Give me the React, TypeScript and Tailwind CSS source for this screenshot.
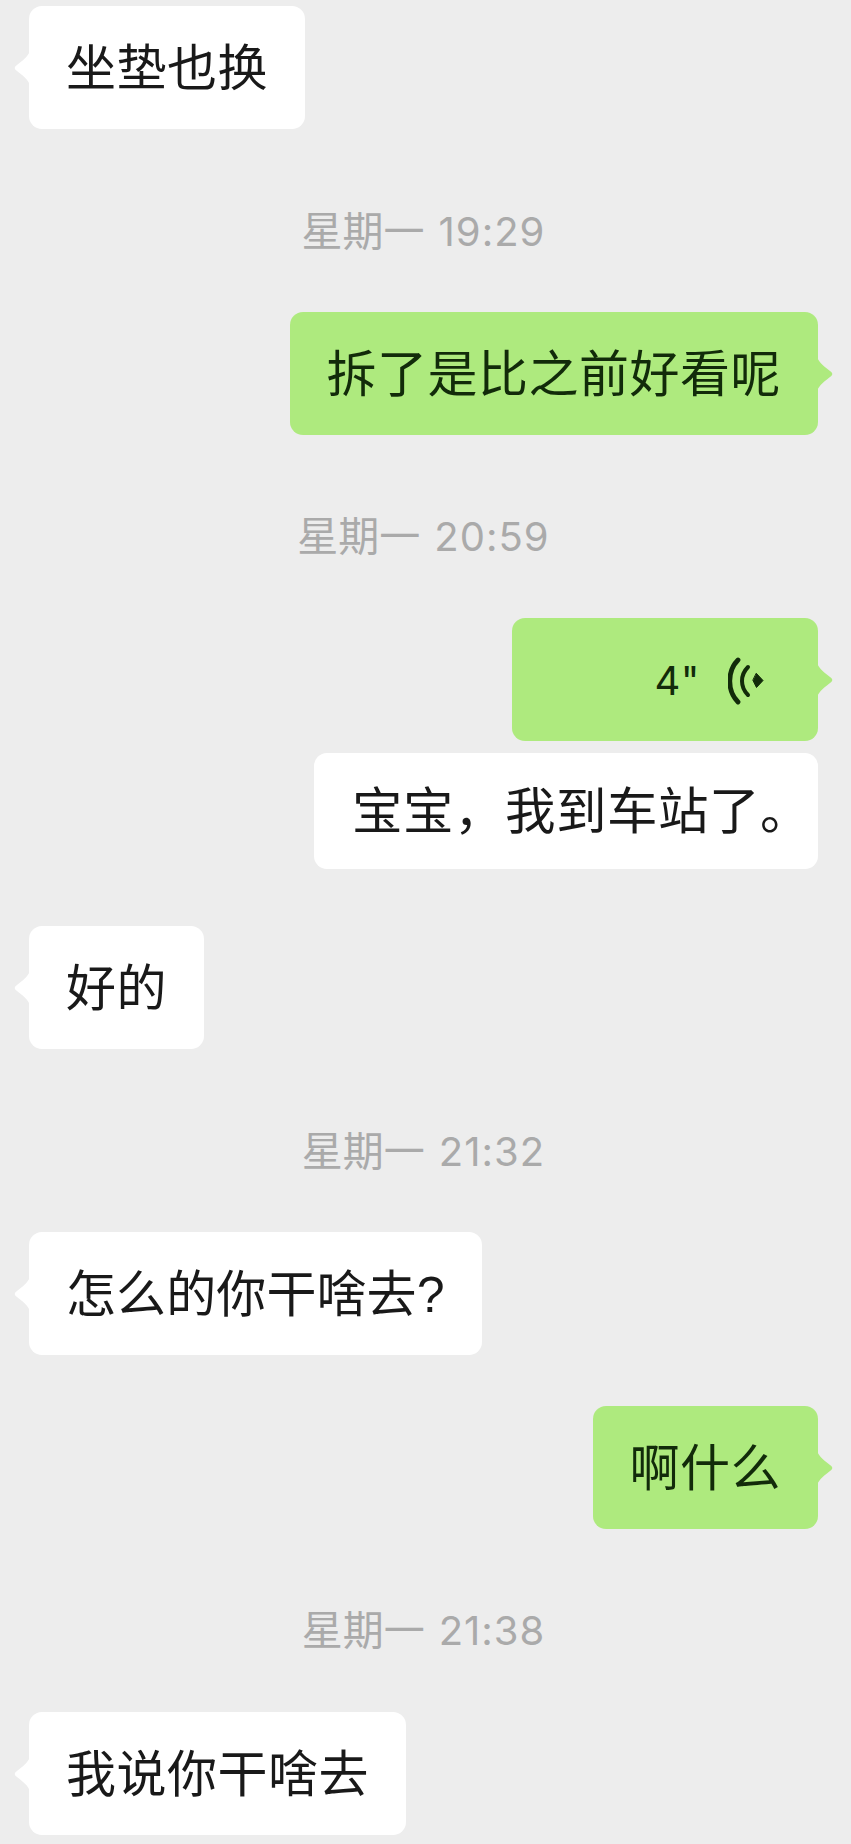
import React from 'react';

const Tail = ({ side, color }: { side: 'left' | 'right'; color: string }) => (
  <svg
    viewBox="0 0 16 36"
    className={`absolute top-1/2 -mt-[18px] h-[36px] w-[16px] ${side === 'left' ? '-left-[15px]' : '-right-[15px] -scale-x-100'}`}
  >
    <path d="M16 0 C15 5 12 8 3 15 C0 17 0 19 3 21 C12 28 15 31 16 36 Z" fill={color} />
  </svg>
);

interface BubbleProps {
  side: 'left' | 'right';
  className?: string;
  tail?: boolean;
  children: React.ReactNode;
}

const Bubble: React.FC<BubbleProps> = ({ side, className = '', tail = true, children }) => {
  const isGreen = side === 'right' && tail;
  return (
    <div
      className={`relative flex h-[123px] items-center rounded-[13px] px-[37px] pt-[2px] text-[50px] leading-none tracking-[0.5px] ${
        isGreen ? 'bg-[#aeea7e] text-[#122b0a]' : 'bg-white text-[#191919]'
      } ${side === 'left' ? 'self-start' : 'self-end'} ${className}`}
    >
      {children}
      {tail && <Tail side={side} color={isGreen ? '#aeea7e' : '#ffffff'} />}
    </div>
  );
};

const TimeLabel = ({ day = '星期一', time, className = '' }: { day?: string; time: string; className?: string }) => (
  <div className={`flex h-[50px] items-center justify-center gap-[14px] text-[41px] leading-none text-[#aaaaaa] ${className}`}>
    <span>{day}</span>
    <span className="font-['Inter',sans-serif] text-[40px] tracking-[1px]">{time}</span>
  </div>
);

const VoiceIcon = () => (
  <svg viewBox="0 0 36 48" className="ml-[28px] h-[48px] w-[36px]" fill="none" stroke="#122b0a" strokeLinecap="round">
    <path d="M10 3 C-1 14 -1 34 10 45" strokeWidth="4.8" />
    <path d="M20 10 C12 18 12 30 20 38" strokeWidth="4" />
    <path d="M28.5 16.5 L35 23.5 L28.5 30.5 L25 23.5 Z" fill="#122b0a" stroke="#122b0a" strokeWidth="1" strokeLinejoin="round" />
  </svg>
);

export default function App() {
  return (
    <div className="flex h-[1844px] w-[851px] flex-col overflow-hidden bg-[#ededed] pl-[29px] pr-[33px] pt-[6px] font-['Liberation_Sans','Noto_Sans_CJK_SC',sans-serif]">
      <Bubble side="left">坐垫也换</Bubble>
      <TimeLabel className="mt-[78px]" time="19:29" />
      <Bubble side="right" className="mt-[55px]">拆了是比之前好看呢</Bubble>
      <TimeLabel className="mt-[77px]" time="20:59" />
      <Bubble side="right" className="mt-[56px] w-[306px] justify-end pr-[54px]">
        <span className="font-['Inter',sans-serif] text-[40px]">4"</span>
        <VoiceIcon />
      </Bubble>
      <Bubble side="right" tail={false} className="mt-[12px] !h-[116px] w-[504px] whitespace-nowrap !pr-0 !pl-[38px] !text-[50.5px]">
        宝宝，我到车站了。
      </Bubble>
      <Bubble side="left" className="mt-[57px]">好的</Bubble>
      <TimeLabel className="mt-[78px]" time="21:32" />
      <Bubble side="left" className="mt-[55px] !tracking-[0.1px]">怎么的你干啥去?</Bubble>
      <Bubble side="right" className="mt-[51px]">啊什么</Bubble>
      <TimeLabel className="mt-[77px]" time="21:38" />
      <Bubble side="left" className="mt-[56px]">我说你干啥去</Bubble>
    </div>
  );
}
